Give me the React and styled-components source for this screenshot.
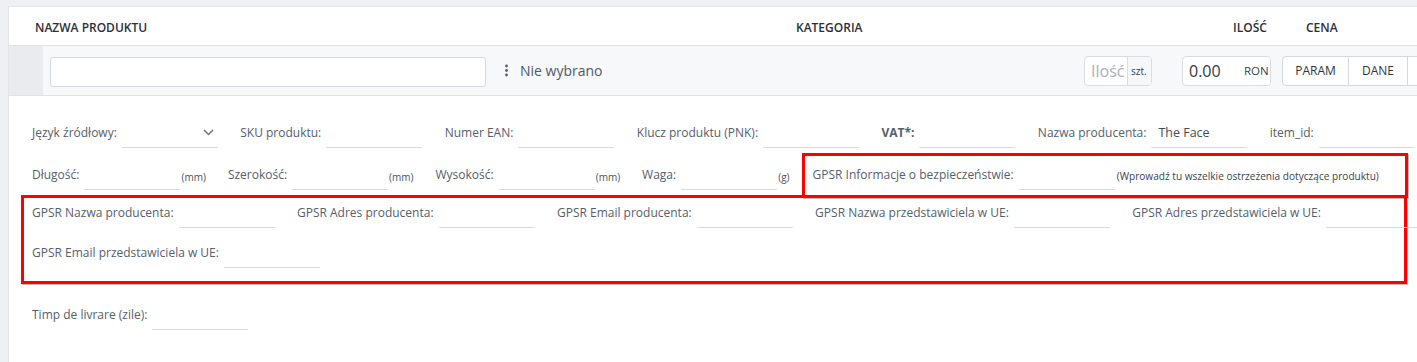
import React from 'react'
import styled, { createGlobalStyle } from 'styled-components'

const GlobalStyle = createGlobalStyle`
    html, body {
        margin: 0;
        padding: 0;
        background: #eef0f3;
        overflow: hidden;
        font-family: "Open Sans", "Liberation Sans", sans-serif;
    }
`

const Page = styled.div`
    padding: 6px 0 0 8px;
    height: 356px;
`

const Panel = styled.div`
    width: 1480px;
    height: 100%;
    background: #fff;
    border: 1px solid #e2e5e9;
    border-right: none;
    border-bottom: none;
    box-sizing: border-box;
`

const HeadRow = styled.div`
    display: flex;
    align-items: center;
    height: 38px;
    border-bottom: 1px solid #dfe2e6;
`

const HeadCell = styled.div`
    flex: 0 0 ${p => p.$w ? p.$w + 'px' : 'auto'};
    padding-left: ${p => p.$pl || 0}px;
    box-sizing: border-box;
    font-size: 12px;
    font-weight: 600;
    color: #2c3036;
    text-transform: uppercase;
    padding-top: 3px;
`

const ProductRow = styled.div`
    display: flex;
    align-items: center;
    height: 49px;
    background: #f7f8f9;
    border-bottom: 1px solid #dfe2e6;
`

const Handle = styled.div`
    flex: 0 0 34px;
    align-self: stretch;
    background: #e9ebee;
`

const NameCell = styled.div`
    flex: 0 0 450px;
    padding: 0 7px;
    box-sizing: border-box;
    display: flex;
    align-items: center;
`

const TextBox = styled.div`
    width: 436px;
    height: 30px;
    margin-top: 2px;
    background: #fff;
    border: 1px solid #d3d8de;
    border-radius: 3px;
    box-sizing: border-box;
`

const CategoryCell = styled.div`
    flex: 0 0 591px;
    display: flex;
    align-items: center;
    gap: 11px;
    padding-left: 11px;
    box-sizing: border-box;
    font-size: 14px;
    color: #4f5866;
`

const Group = styled.div`
    display: flex;
    height: 30px;
    margin-left: ${p => p.$ml || 0}px;
    border: 1px solid #d9dde2;
    border-radius: 4px;
    background: #fff;
    box-sizing: border-box;
    overflow: hidden;
`

const GroupInput = styled.div`
    width: ${p => p.$w}px;
    display: flex;
    align-items: center;
    padding-left: 6px;
    box-sizing: border-box;
    font-size: 16px;
    color: ${p => p.$muted ? '#a9b0ba' : '#333a42'};
`

const Addon = styled.div`
    width: ${p => p.$w}px;
    display: flex;
    align-items: center;
    padding-left: ${p => p.$pl || 3}px;
    box-sizing: border-box;
    font-size: ${p => p.$fs || 10}px;
    color: #3a3f46;
    background: ${p => p.$bg || '#f6f7f8'};
    border-left: 1px solid ${p => p.$line ? '#d9dde2' : 'transparent'};
    white-space: nowrap;
    overflow: hidden;
`

const BtnGroup = styled.div`
    display: flex;
    margin-left: 11px;
    height: 30px;
`

const Btn = styled.div`
    width: ${p => p.$w}px;
    display: flex;
    align-items: center;
    justify-content: center;
    font-size: 12px;
    color: #2f343b;
    background: #fff;
    border: 1px solid #d5d9de;
    border-left: ${p => p.$first ? '1px solid #d5d9de' : 'none'};
    border-radius: ${p => p.$first ? '4px 0 0 4px' : '0'};
    box-sizing: border-box;
`

const Details = styled.div`
    padding: 22px 0 0 23px;
`

const Row = styled.div`
    display: flex;
    align-items: center;
    min-height: 30px;
    margin-bottom: ${p => p.$mb || 0}px;
    white-space: nowrap;
`

const Field = styled.div`
    display: flex;
    align-items: center;
    margin-right: ${p => p.$mr}px;
    flex-shrink: 0;
`

const Label = styled.span`
    font-size: 12px;
    color: #565e69;
    font-weight: ${p => p.$bold ? 700 : 400};
    margin-right: 5px;
    margin-top: -2px;
`

const Line = styled.div`
    position: relative;
    width: 96px;
    height: 30px;
    border-bottom: 1px solid #d6dbe1;
    box-sizing: border-box;
    display: flex;
    align-items: center;
    padding-left: 7px;
    font-size: 12.5px;
    color: #454b53;
    margin-top: -1px;
`

const Chevron = styled.svg`
    position: absolute;
    right: 4px;
    top: 11px;
`

const Unit = styled.span`
    font-size: 10px;
    color: #4b525b;
    margin-left: 1px;
    margin-top: 2px;
`

const Hint = styled.span`
    font-size: 10.1px;
    color: #3d434b;
    margin-left: 2px;
    margin-top: 1px;
`

const Marked = styled.div`
    flex-shrink: 0;
    border: 3px solid #ff0000;
    box-shadow: 1px 1px 0 rgba(60, 60, 60, 0.35);
    width: ${p => p.$w}px;
    box-sizing: border-box;
    margin-left: ${p => p.$ml || 0}px;
    margin-top: ${p => p.$mt || 0}px;
    padding: ${p => p.$pad};
`

function Dots() {
    return (
        <svg width="5" height="13" viewBox="0 0 5 13">
            <circle cx="2.5" cy="2" r="1.4" fill="#59606b" />
            <circle cx="2.5" cy="6.5" r="1.4" fill="#59606b" />
            <circle cx="2.5" cy="11" r="1.4" fill="#59606b" />
        </svg>
    )
}

function Input({ label, bold, value, unit, hint, select }) {
    return (
        <Field $mr={unit ? 22 : 22.4}>
            <Label $bold={bold}>{label}</Label>
            <Line>
                {value}
                {select && (
                    <Chevron width="11" height="7" viewBox="0 0 11 7">
                        <path d="M1 1l4.5 4.5L10 1" fill="none" stroke="#6d747e" strokeWidth="1.5" />
                    </Chevron>
                )}
            </Line>
            {unit && <Unit>{unit}</Unit>}
            {hint && <Hint>{hint}</Hint>}
        </Field>
    )
}

export default function App() {
    return (
        <Page>
            <GlobalStyle />
            <Panel>
                <HeadRow>
                    <HeadCell $w={787} $pl={26}>Nazwa produktu</HeadCell>
                    <HeadCell $w={437}>Kategoria</HeadCell>
                    <HeadCell $w={73}>Ilość</HeadCell>
                    <HeadCell>Cena</HeadCell>
                </HeadRow>

                <ProductRow>
                    <Handle />
                    <NameCell>
                        <TextBox />
                    </NameCell>
                    <CategoryCell>
                        <Dots />
                        <span>Nie wybrano</span>
                    </CategoryCell>
                    <Group>
                        <GroupInput $w={42} $muted>Ilość</GroupInput>
                        <Addon $w={24} $line>szt.</Addon>
                    </Group>
                    <Group $ml={30}>
                        <GroupInput $w={59}>0.00</GroupInput>
                        <Addon $w={28} $fs={11.5} $pl={1} $bg="#fff">RON</Addon>
                    </Group>
                    <BtnGroup>
                        <Btn $w={67} $first>PARAM</Btn>
                        <Btn $w={59}>DANE</Btn>
                        <Btn $w={40} />
                    </BtnGroup>
                </ProductRow>

                <Details>
                    <Row $mb={5}>
                        <Input label="Język źródłowy:" select />
                        <Input label="SKU produktu:" />
                        <Input label="Numer EAN:" />
                        <Input label="Klucz produktu (PNK):" />
                        <Input label="VAT*:" bold />
                        <Input label="Nazwa producenta:" value="The Face" />
                        <Input label="item_id:" />
                    </Row>
                    <Row>
                        <Input label="Długość:" unit="(mm)" />
                        <Input label="Szerokość:" unit="(mm)" />
                        <Input label="Wysokość:" unit="(mm)" />
                        <Input label="Waga:" unit="(g)" />
                        <Marked $w={606} $ml={-10} $pad="4px 8px 5px">
                            <Row>
                                <Input
                                    label="GPSR Informacje o bezpieczeństwie:"
                                    hint="(Wprowadź tu wszelkie ostrzeżenia dotyczące produktu)"
                                />
                            </Row>
                        </Marked>
                    </Row>
                    <Marked $w={1386} $ml={-11} $mt={-3} $pad="0 8px 13px">
                        <Row $mb={10}>
                            <Input label="GPSR Nazwa producenta:" />
                            <Input label="GPSR Adres producenta:" />
                            <Input label="GPSR Email producenta:" />
                            <Input label="GPSR Nazwa przedstawiciela w UE:" />
                            <Input label="GPSR Adres przedstawiciela w UE:" />
                        </Row>
                        <Row>
                            <Input label="GPSR Email przedstawiciela w UE:" />
                        </Row>
                    </Marked>
                    <Row style={{ marginTop: 16 }}>
                        <Input label="Timp de livrare (zile):" />
                    </Row>
                </Details>
            </Panel>
        </Page>
    )
}
